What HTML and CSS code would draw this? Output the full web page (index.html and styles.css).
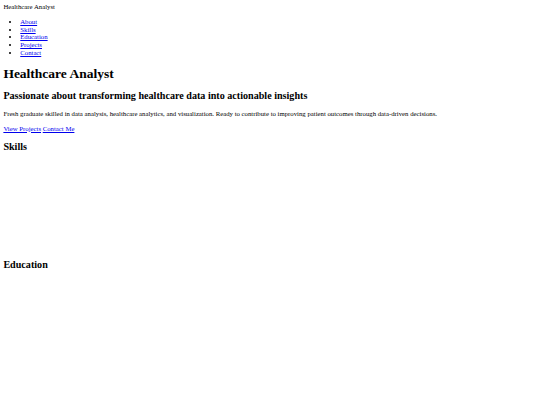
FILE: index.html
```html
<!DOCTYPE html>
<html lang="en">
<head>
<meta charset="utf-8">
<title>Healthcare Analyst</title>
<link rel="stylesheet" href="styles.css">
</head>
<body>
<header class="site-header">
  <div class="logo">Healthcare Analyst</div>
  <nav>
    <ul class="nav-list">
      <li><a href="#about">About</a></li>
      <li><a href="#skills">Skills</a></li>
      <li><a href="#education">Education</a></li>
      <li><a href="#projects">Projects</a></li>
      <li><a href="#contact">Contact</a></li>
    </ul>
  </nav>
</header>
<section id="about" class="hero">
  <h1>Healthcare Analyst</h1>
  <h2>Passionate about transforming healthcare data into actionable insights</h2>
  <p>Fresh graduate skilled in data analysis, healthcare analytics, and visualization. Ready to contribute to improving patient outcomes through data-driven decisions.</p>
  <p><a href="#projects">View Projects</a> <a href="#contact">Contact Me</a></p>
</section>
<section id="skills" class="section">
  <h2>Skills</h2>
  <div class="skills-grid"></div>
</section>
<section id="education" class="section">
  <h2>Education</h2>
  <div class="education-list"></div>
</section>
<section id="projects" class="section">
  <h2>Projects</h2>
</section>
</body>
</html>
```

FILE: styles.css
```css
html {
  background: #fff;
}
body {
  margin: 3.375px;
  font-family: "Liberation Serif", "Times New Roman", serif;
  font-size: 6.75px;
  line-height: 1.15;
  color: #000;
}
.nav-list {
  margin: 1em 0;
  padding-left: 2.5em;
}
a {
  color: #0000ee;
}
h1 {
  font-size: 2em;
  margin: 0.67em 0;
}
h2 {
  font-size: 1.5em;
  margin: 0.83em 0;
}
p {
  margin: 1em 0;
}
.skills-grid {
  height: 89.5px;
}
.education-list {
  height: 116px;
}
```
